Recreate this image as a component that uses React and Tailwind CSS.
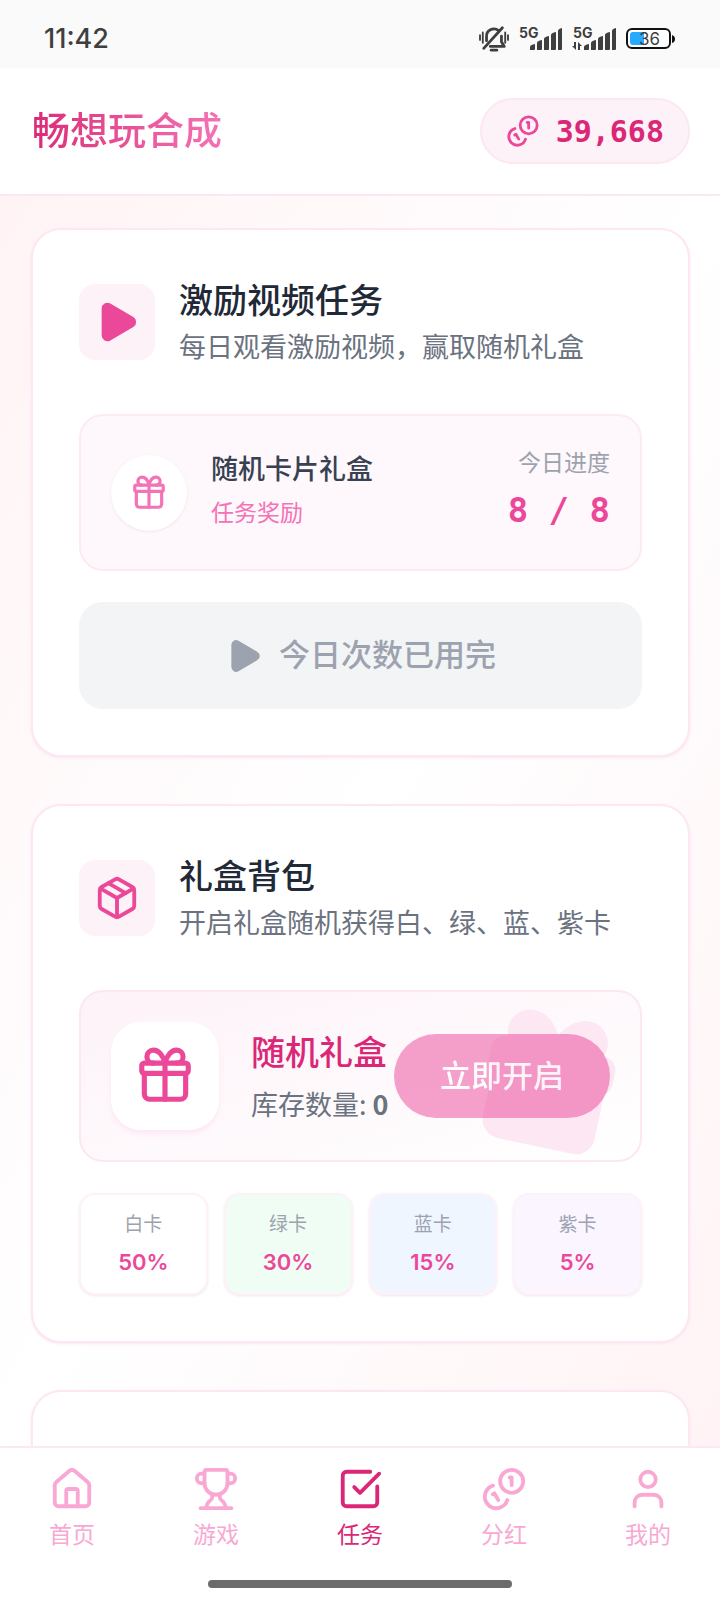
import { Play, Package, House, Trophy, SquareCheckBig, User } from 'lucide-react';

const cards = [
  { name: '白卡', rate: '50%', bg: 'bg-white' },
  { name: '绿卡', rate: '30%', bg: 'bg-[#f0fdf4]' },
  { name: '蓝卡', rate: '15%', bg: 'bg-[#eff6ff]' },
  { name: '紫卡', rate: '5%', bg: 'bg-[#faf5ff]' },
];

const tabs = [
  { name: '首页', icon: House },
  { name: '游戏', icon: Trophy },
  { name: '任务', icon: SquareCheckBig, active: true },
  { name: '分红', icon: Coins },
  { name: '我的', icon: User },
];

function Icon({ size, fill = 'none', className, children }) {
  return (
    <svg
      width={size}
      height={size}
      viewBox="0 0 24 24"
      fill={fill}
      stroke="currentColor"
      strokeWidth="2"
      strokeLinecap="round"
      strokeLinejoin="round"
      className={className}
    >
      {children}
    </svg>
  );
}

function Coins(props) {
  return (
    <Icon {...props}>
      <path d="M13.744 17.736a6 6 0 1 1-7.48-7.48" />
      <path d="M15 6h1v4" />
      <path d="m6.134 14.768.866-.5 2 3.464" />
      <circle cx="16" cy="8" r="6" />
    </Icon>
  );
}

function Gift(props) {
  return (
    <Icon {...props}>
      <path d="M12 7v14" />
      <path d="M20 11v8a2 2 0 0 1-2 2H6a2 2 0 0 1-2-2v-8" />
      <path d="M7.5 7a1 1 0 0 1 0-5A4.8 8 0 0 1 12 7a4.8 8 0 0 1 4.5-5 1 1 0 0 1 0 5" />
      <rect x="3" y="7" width="18" height="4" rx="1" />
    </Icon>
  );
}

function SignalBars({ data }) {
  return (
    <svg width="46" height="28" viewBox="0 0 46 28" fill="#3f3f3f" className="ml-1">
      <path d="M12 25v-3q0-2 5-3v5q0 1-1 1z" />
      <path d="M19 25v-7q0-2 5-3v9q0 1-1 1z" />
      <path d="M26 25V14q0-2 5-3v13q0 1-1 1z" />
      <path d="M33 25V10q0-2 5-3v17q0 1-1 1z" />
      <path d="M40 25V6q0-2 4-3v21q0 1-1 1z" />
      {data && <path d="M4 17v8l-4-4h2v-4zM6 25v-8l4 4h-2v4z" />}
      <text x="1" y="13" fontSize="14" fontWeight="700" fontFamily="Inter, sans-serif">5G</text>
    </svg>
  );
}

function StatusBar() {
  return (
    <div className="flex h-[68px] shrink-0 items-center justify-between bg-[#fafafa] px-11 pt-2.5 font-['Inter',sans-serif] text-[#3f3f3f]">
      <span className="text-[27px] font-medium">11:42</span>
      <div className="flex items-center gap-1">
        <svg width="32" height="28" viewBox="0 0 34 30" fill="none" stroke="#3f3f3f" strokeWidth="3" strokeLinecap="round" strokeLinejoin="round">
          <path d="M9 17v-4a8 8 0 0 1 13-7M25 12v6l3 5H13M6 25 26 3" />
          <path d="M14 27h6" />
          <path d="M2 11v5M5 8v11M29 8v11M32 11v5" strokeWidth="2" />
        </svg>
        <SignalBars />
        <SignalBars data />
        <svg width="50" height="24" viewBox="0 0 50 24" className="ml-1">
          <rect x="1" y="2" width="43" height="19" rx="5" fill="#fff" stroke="#111" strokeWidth="2" />
          <path d="M7 5h11v13H7a3 3 0 0 1-3-3V8a3 3 0 0 1 3-3z" fill="#26a9ff" />
          <path d="M46 8q3 1 3 4t-3 4z" fill="#111" />
          <text x="13" y="18" fontSize="17" fontFamily="Inter, sans-serif" fill="#3f3f3f">36</text>
        </svg>
      </div>
    </div>
  );
}

function CardHeader({ icon, title, desc }) {
  return (
    <div className="mb-[47px] flex min-h-[91px] items-center gap-6">
      <div className="flex size-[76px] shrink-0 items-center justify-center rounded-2xl bg-[#fdf2f8] text-[#ec4899]">
        {icon}
      </div>
      <div className="pb-0.5">
        <h2 className="text-[34px] leading-[45px] font-medium text-[#1f2937]">{title}</h2>
        <p className="mt-1.5 text-[27px] leading-[38px] text-[#6b7280]">{desc}</p>
      </div>
    </div>
  );
}

function Card({ children }) {
  return (
    <section className="rounded-[30px] border-2 border-[#fce7f3] bg-white p-[46px] shadow-sm shadow-[#fce7f3]">
      {children}
    </section>
  );
}

export default function App() {
  return (
    <div className="flex h-screen flex-col overflow-hidden bg-white font-['Noto_Sans_CJK_SC',sans-serif]">
      <StatusBar />

      {/* Header */}
      <header className="flex h-32 shrink-0 items-center justify-between border-b-2 border-[#fce7f3] bg-white px-[30px]">
        <h1 className="bg-gradient-to-r from-[#db2777] to-[#f472b6] bg-clip-text pb-2 pl-0.5 text-[38px] font-medium text-transparent">
          畅想玩合成
        </h1>
        <div className="flex h-[66px] items-center gap-4 rounded-full border-2 border-[#fce7f3] bg-[#fdf2f8] px-6">
          <Coins size={34} className="text-[#ec4899]" />
          <span className="font-['DejaVu_Sans_Mono',monospace] text-[30px] font-bold text-[#db2777]">39,668</span>
        </div>
      </header>

      <main className="flex min-h-0 flex-1 flex-col gap-[47px] overflow-y-auto bg-gradient-to-br from-[#fff3f5] via-white to-[#fff3f5] pt-8 pr-[30px] pl-[31px] [scrollbar-width:none]">
        {/* Video task */}
        <Card>
          <CardHeader
            icon={<Play size={46} fill="currentColor" />}
            title="激励视频任务"
            desc="每日观看激励视频，赢取随机礼盒"
          />
          <div className="mb-[31px] flex items-center justify-between rounded-3xl border-2 border-[#fdeaf3] bg-[#fef7fb] p-[30px]">
            <div className="flex items-center gap-6">
              <div className="flex size-[76px] items-center justify-center rounded-full bg-white text-[#f472b6] shadow-sm shadow-[#f3e8ee]">
                <Gift size={38} />
              </div>
              <div className="pb-1.5">
                <p className="text-[27px] leading-[38px] font-medium text-[#374151]">随机卡片礼盒</p>
                <p className="mt-1 text-[23px] leading-[40px] text-[#f472b6]">任务奖励</p>
              </div>
            </div>
            <div className="pb-0.5 text-right">
              <p className="text-[23px] leading-[31px] text-[#9ca3af]">今日进度</p>
              <p className="mt-1.5 font-['DejaVu_Sans_Mono',monospace] text-[34px] leading-[54px] font-bold text-[#ec4899]">8 / 8</p>
            </div>
          </div>
          <button
            type="button"
            disabled
            className="flex h-[107px] w-full items-center justify-center gap-4 rounded-3xl bg-[#f3f4f6] text-[31px] font-medium text-[#9ca3af]"
          >
            <Play size={38} fill="currentColor" />
            <span className="pb-1">今日次数已用完</span>
          </button>
        </Card>

        {/* Gift bag */}
        <Card>
          <CardHeader
            icon={<Package size={46} />}
            title="礼盒背包"
            desc="开启礼盒随机获得白、绿、蓝、紫卡"
          />
          <div className="relative mb-[31px] flex items-center justify-between overflow-hidden rounded-3xl border-2 border-[#fce7f3] bg-gradient-to-br from-[#fdf2f8] to-white p-[30px]">
            <Gift size={152} fill="currentColor" className="absolute top-4 right-4 rotate-12 text-[#fce7f3]" />
            <div className="flex items-center gap-8">
              <div className="flex size-[108px] shrink-0 items-center justify-center rounded-[30px] bg-white text-[#ec4899] shadow-md shadow-[#fce7f3]">
                <Gift size={62} />
              </div>
              <div className="pb-1.5 whitespace-nowrap">
                <h3 className="text-[34px] leading-[53px] font-medium text-[#db2777]">随机礼盒</h3>
                <p className="mt-2 text-[27px] leading-[38px] text-[#6b7280]">
                  库存数量: <span className="font-bold">0</span>
                </p>
              </div>
            </div>
            <button
              type="button"
              disabled
              className="relative h-[84px] shrink-0 rounded-full bg-[#ec4899] px-[46px] pb-1 text-[31px] font-medium text-white opacity-50"
            >
              立即开启
            </button>
          </div>
          <div className="grid grid-cols-4 gap-4">
            {cards.map((card) => (
              <div
                key={card.name}
                className={`rounded-2xl border-2 border-[#fdf2f8] py-[14px] text-center shadow-sm shadow-[#f3e8ee] ${card.bg}`}
              >
                <p className="text-[19px] leading-[28px] text-[#9ca3af]">{card.name}</p>
                <p className="mt-2 font-['Inter',sans-serif] text-[22px] leading-[34px] font-semibold text-[#ec4899]">{card.rate}</p>
              </div>
            ))}
          </div>
        </Card>

        <Card>
          <CardHeader icon={<Gift size={46} />} />
        </Card>
      </main>

      {/* Bottom navigation */}
      <nav className="shrink-0 border-t-2 border-[#fce7f3] bg-white">
        <div className="grid grid-cols-5 pt-[18px]">
          {tabs.map(({ name, icon: TabIcon, active }) => (
            <a
              key={name}
              href="#"
              className={`flex flex-col items-center gap-1 text-[23px] leading-[34px] ${active ? 'text-[#db2777]' : 'text-[#f9a8d4]'}`}
            >
              <TabIcon size={46} />
              {name}
            </a>
          ))}
        </div>
        <div className="flex justify-center pt-[30px] pb-3">
          <div className="h-2 w-[304px] rounded-full bg-[#6b6b6b]" />
        </div>
      </nav>
    </div>
  );
}
